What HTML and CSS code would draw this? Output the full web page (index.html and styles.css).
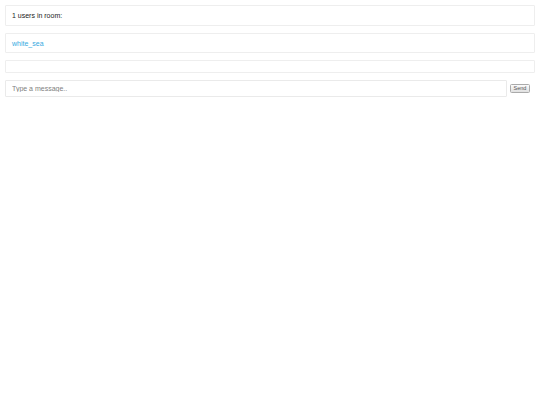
FILE: index.html
```html
<!DOCTYPE html>
<html>
<head>
<meta charset="utf-8">
<link rel="stylesheet" href="styles.css">
</head>
<body>
<div class="chat">
  <div class="panel count">1 users in room:</div>
  <div class="panel users"><span class="user">white_sea</span></div>
  <div class="panel messages"></div>
  <form class="composer">
    <input class="msg" type="text" placeholder="Type a message..">
    <button class="send" type="button">Send</button>
  </form>
</div>
</body>
</html>
```
FILE: styles.css
```css
html, body {
  margin: 0;
  padding: 0;
  background: #fff;
}
body {
  font-family: "Liberation Sans", Arial, sans-serif;
  font-size: 7px;
  color: #222;
}
.chat {
  padding: 5px;
  display: flex;
  flex-direction: column;
  gap: 7px;
}
.panel {
  box-sizing: border-box;
  border: 1px solid #eeeeee;
  border-radius: 1px;
  padding: 0 6px;
  display: flex;
  align-items: center;
}
.count { height: 21px; }
.users { height: 20px; }
.messages { height: 13px; }
.user { color: #36aadf; }
.composer {
  margin: 0;
  display: flex;
  align-items: center;
  gap: 3px;
}
.msg {
  box-sizing: border-box;
  width: 502px;
  height: 17px;
  border: 1px solid #eaeaea;
  border-radius: 1px;
  padding: 0 6px;
  font-family: "Liberation Sans", Arial, sans-serif;
  font-size: 7px;
  color: #333;
  outline: none;
  margin: 0;
}
.msg::placeholder { color: #808080; }
.send {
  box-sizing: border-box;
  width: 20px;
  height: 9px;
  padding: 0;
  margin: 0;
  border: 1px solid #aaaaaa;
  border-radius: 1.5px;
  background: linear-gradient(#fbfbfb, #e0e0e0);
  font-family: "Liberation Sans", Arial, sans-serif;
  font-size: 5.5px;
  line-height: 7px;
  color: #555;
}
```
